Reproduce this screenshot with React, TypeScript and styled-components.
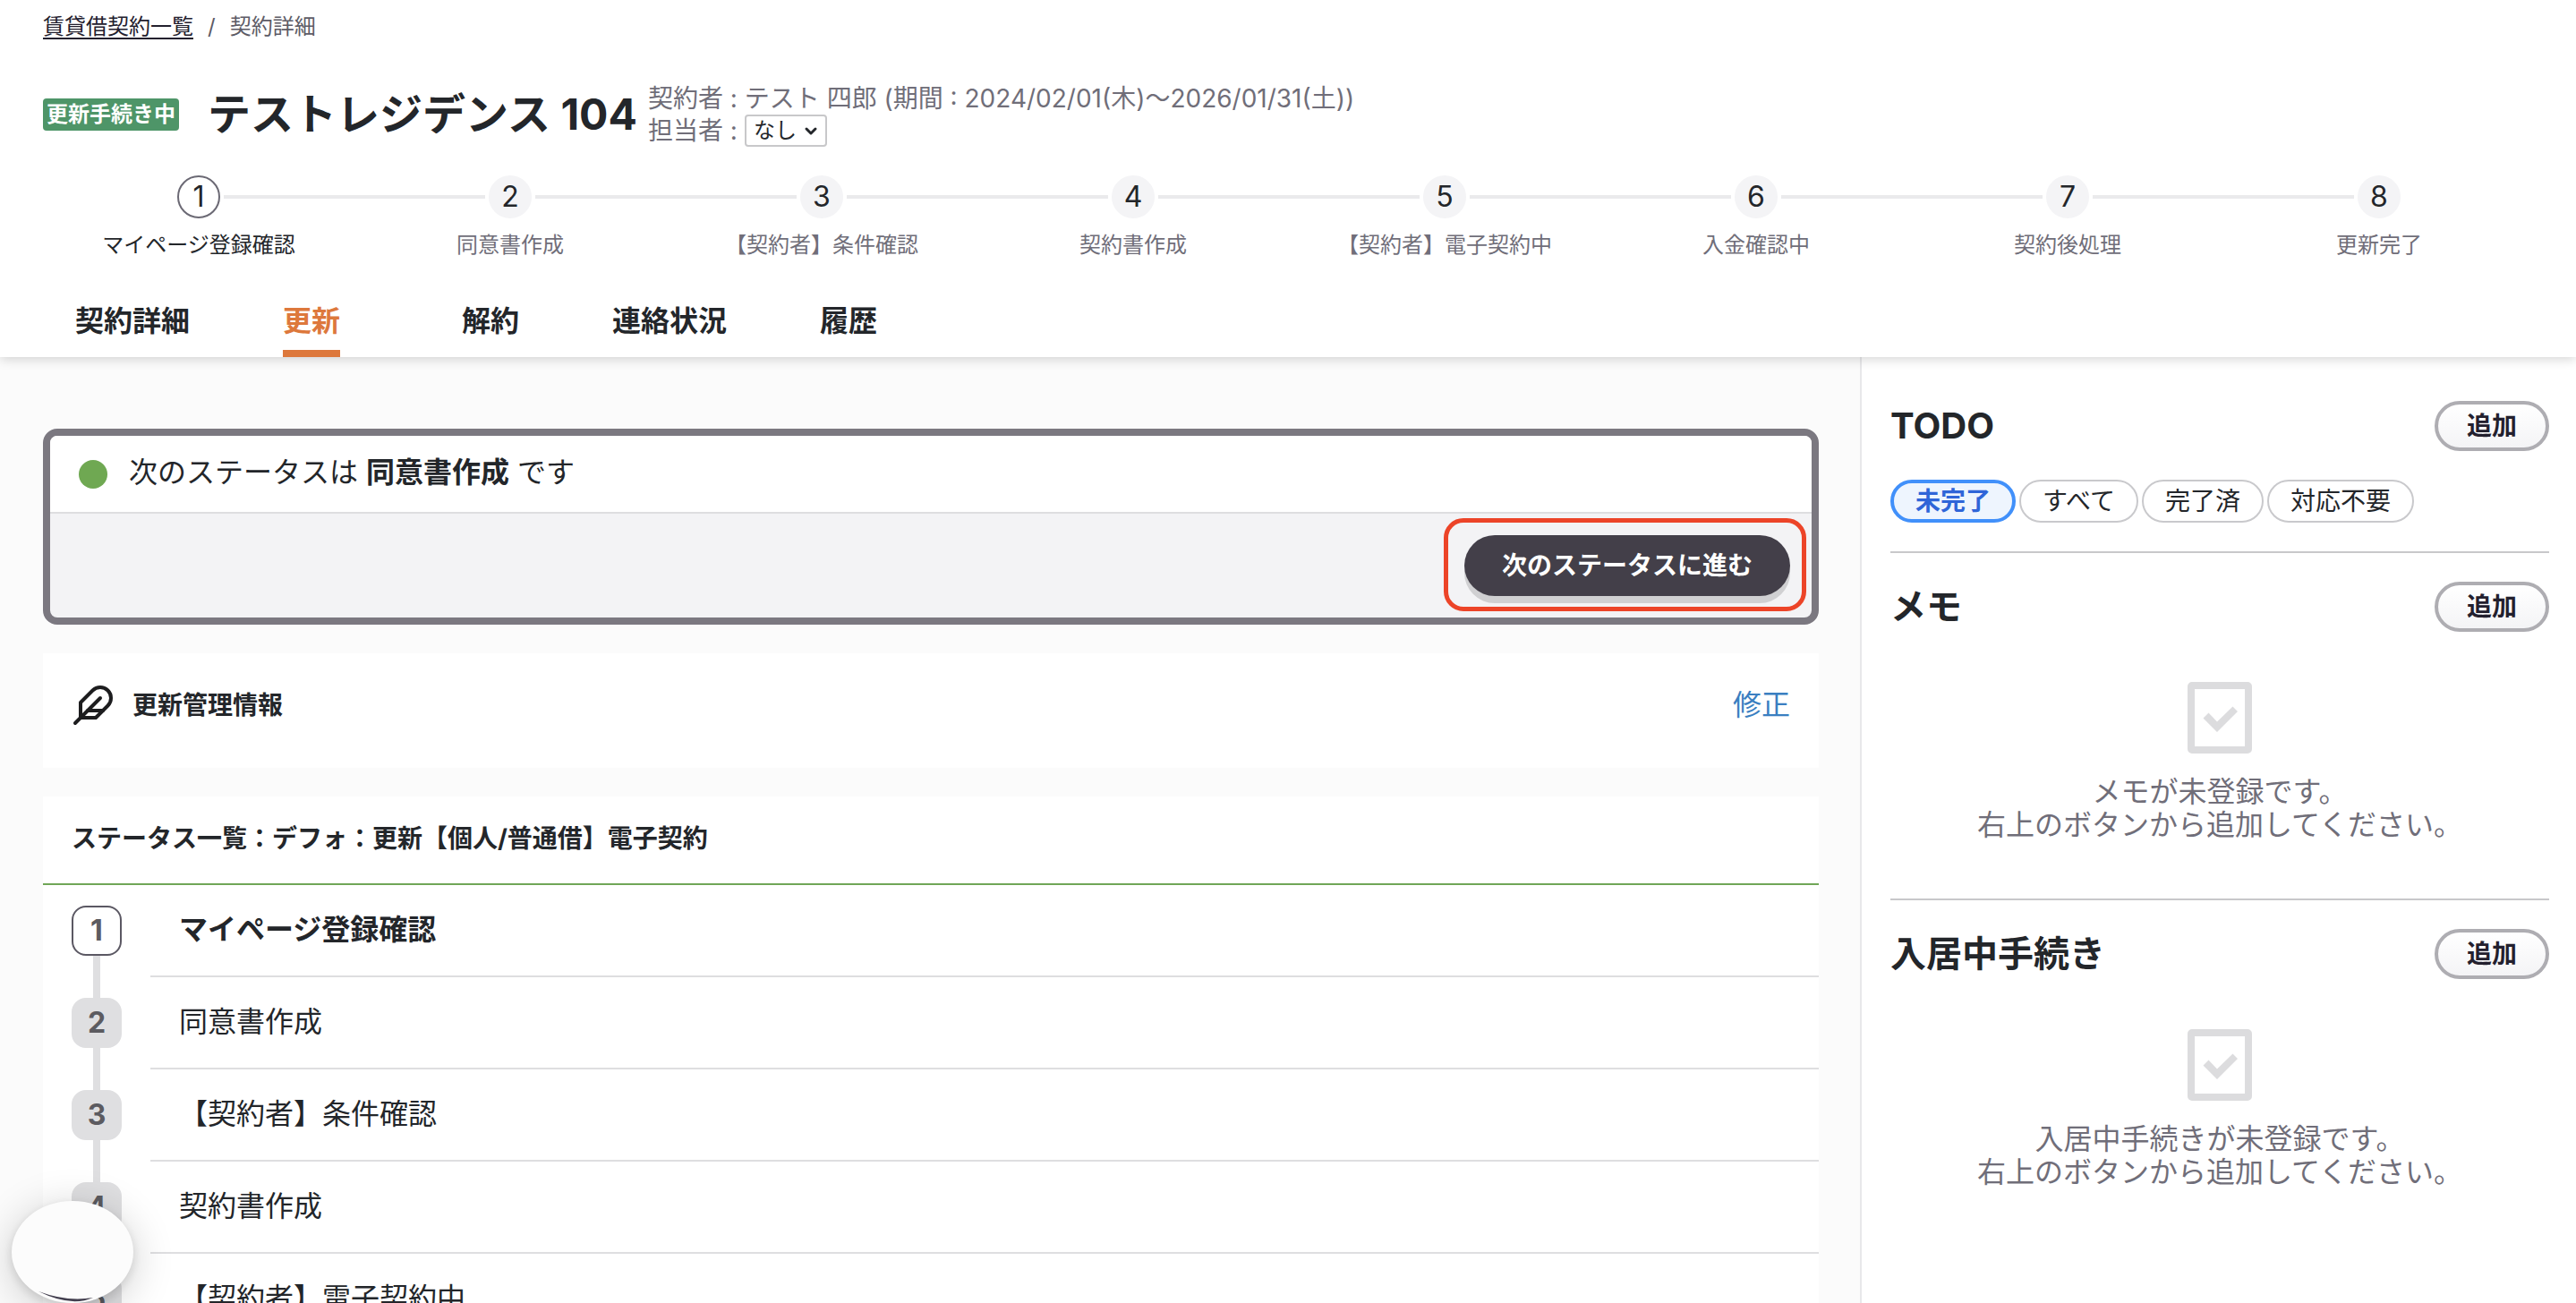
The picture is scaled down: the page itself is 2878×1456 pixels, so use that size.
import React from "react";
import styled, { createGlobalStyle } from "styled-components";

const Global = createGlobalStyle`
  *, *::before, *::after { box-sizing: border-box; }
  html, body, #root { height: 100%; }
  body {
    margin: 0;
    overflow: hidden;
    background: #fbfbfb;
    color: #23262a;
    font-family: Inter, "Noto Sans CJK JP", sans-serif;
    font-size: 32px;
  }
  button, select { font-family: inherit; color: inherit; }
  h1, h2, h3, p, ol { margin: 0; padding: 0; }
  ol { list-style: none; }
`;

const Page = styled.div`
  display: flex;
  flex-direction: column;
  height: 100vh;
  overflow: hidden;
`;

const Header = styled.header`
  position: relative;
  z-index: 1;
  flex: none;
  padding: 12px 46px 0 48px;
  background: #fff;
  box-shadow: 0 2px 12px rgba(0, 0, 0, 0.18);
`;

const Breadcrumb = styled.nav`
  display: flex;
  gap: 16px;
  font-size: 24px;
  line-height: 36px;
  color: #5d5b66;
`;

const CrumbLink = styled.a`
  color: #23202e;
  text-decoration: underline;
  text-underline-offset: 4px;
`;

const TitleRow = styled.div`
  display: flex;
  align-items: center;
  height: 72px;
  margin: 44px 0 32px;
`;

const Badge = styled.span`
  padding: 0 4px;
  border-radius: 4px;
  background: #4e9568;
  color: #fff;
  font-size: 24px;
  font-weight: 700;
  line-height: 36px;
`;

const Title = styled.h1`
  margin: 0 12px 0 32px;
  font-size: 48px;
  font-weight: 700;
  line-height: 72px;
`;

const Meta = styled.div`
  font-size: 28px;
  line-height: 36px;
  color: #706e79;
`;

const MetaLine = styled.div`
  display: flex;
  align-items: center;
  gap: 8px;
  height: 36px;
`;

const SelectBox = styled.span`
  position: relative;
  display: inline-flex;
`;

const Select = styled.select`
  appearance: none;
  width: 92px;
  height: 36px;
  padding: 0 8px;
  border: 2px solid #c8c8ca;
  border-radius: 4px;
  background: #fff;
  color: #23262a;
  font-size: 24px;
  line-height: 32px;
`;

const Chevron = styled.svg`
  position: absolute;
  top: 12px;
  right: 10px;
  pointer-events: none;
`;

const Steps = styled.ol`
  display: grid;
  grid-template-columns: repeat(8, 1fr);
`;

const Step = styled.li`
  position: relative;
  display: flex;
  flex-direction: column;
  align-items: center;
  gap: 12px;

  &:not(:last-child)::after {
    content: "";
    position: absolute;
    top: 22px;
    left: calc(50% + 28px);
    width: calc(100% - 56px);
    height: 4px;
    background: #eaeaec;
  }
`;

const StepNumber = styled.span<{ $active: boolean }>`
  width: 48px;
  height: 48px;
  border: 2px solid ${(p) => (p.$active ? "#6b6974" : "#f4f4f6")};
  border-radius: 50%;
  background: ${(p) => (p.$active ? "#fff" : "#f4f4f6")};
  font-size: 32px;
  line-height: 44px;
  text-align: center;
`;

const StepLabel = styled.span<{ $active: boolean }>`
  color: ${(p) => (p.$active ? "#23262a" : "#706e79")};
  font-size: 24px;
  line-height: 36px;
  white-space: nowrap;
`;

const Tabs = styled.nav`
  display: flex;
  margin-top: 43px;
`;

const TabCell = styled.div`
  display: flex;
  justify-content: center;
  width: 200px;
`;

const Tab = styled.a<{ $active: boolean }>`
  height: 64px;
  border-bottom: 8px solid ${(p) => (p.$active ? "#dd783c" : "transparent")};
  color: ${(p) => (p.$active ? "#dd783c" : "#23262a")};
  font-weight: 700;
  line-height: 48px;
  text-decoration: none;
`;

const Body = styled.div`
  display: flex;
  flex: 1;
  min-height: 0;
`;

const Main = styled.main`
  display: flex;
  flex: 1;
  flex-direction: column;
  gap: 32px;
  min-width: 0;
  padding: 80px 46px 0 48px;
`;

const NextBox = styled.section`
  flex: none;
  border: 8px solid #7b7880;
  border-radius: 16px;
  background: #f3f3f5;
`;

const NextHead = styled.div`
  display: flex;
  align-items: center;
  gap: 24px;
  height: 87px;
  padding: 0 32px;
  border-bottom: 2px solid #dedee0;
  border-radius: 8px 8px 0 0;
  background: #fff;
`;

const NextText = styled.p`
  padding-bottom: 4px;
  line-height: 44px;
`;

const Dot = styled.span`
  width: 32px;
  height: 32px;
  border-radius: 50%;
  background: #6fa852;
`;

const NextFoot = styled.div`
  display: flex;
  justify-content: flex-end;
  padding: 24px;
`;

const ActionWrap = styled.div`
  position: relative;
`;

const Highlight = styled.span`
  position: absolute;
  inset: -19px -18px -17px -23px;
  border: 5px solid #ec4428;
  border-radius: 22px;
  pointer-events: none;
`;

const ActionButton = styled.button`
  display: block;
  height: 68px;
  padding: 0 42px 4px;
  border: 0;
  border-radius: 34px;
  background: #433f49;
  box-shadow: 0 8px 0 #d0d0d2;
  color: #fff;
  font-size: 28px;
  font-weight: 700;
`;

const InfoCard = styled.section`
  display: flex;
  flex: none;
  align-items: center;
  gap: 20px;
  height: 128px;
  padding: 0 32px 12px;
  background: #fff;
`;

const CardTitle = styled.h2`
  flex: 1;
  font-size: 28px;
  font-weight: 700;
  line-height: 44px;
`;

const EditLink = styled.a`
  color: #3a7fc1;
  line-height: 44px;
  text-decoration: none;
`;

const StatusCard = styled.section`
  flex: none;
  background: #fff;
`;

const StatusHead = styled.div`
  display: flex;
  align-items: center;
  height: 99px;
  padding: 0 32px 4px;
  border-bottom: 2px solid #70a657;
`;

const StatusRow = styled.li`
  display: flex;
  gap: 32px;
  height: 103px;
  padding-left: 32px;
`;

const NumberColumn = styled.div`
  display: flex;
  flex-direction: column;
  align-items: center;
  width: 56px;
`;

const Rail = styled.span<{ $visible: boolean; $grow?: boolean }>`
  flex: ${(p) => (p.$grow ? "1" : "0 0 23px")};
  width: 8px;
  background: ${(p) => (p.$visible ? "#dfdfe1" : "transparent")};
`;

const NumberBox = styled.span<{ $active: boolean }>`
  width: 56px;
  height: 56px;
  border: 2px solid ${(p) => (p.$active ? "#5b5863" : "#dfdfe1")};
  border-radius: 16px;
  background: ${(p) => (p.$active ? "#fff" : "#dfdfe1")};
  color: #5c5b60;
  font-weight: 700;
  line-height: 52px;
  text-align: center;
`;

const RowLabel = styled.div<{ $active: boolean }>`
  flex: 1;
  padding: 0 32px;
  border-bottom: 2px solid #dedee0;
  font-weight: ${(p) => (p.$active ? 700 : 400)};
  line-height: 99px;
`;

const Side = styled.aside`
  width: 800px;
  padding: 17px 30px 0 32px;
  border-left: 2px solid #e8e8ea;
  background: #fff;
`;

const Panel = styled.section`
  padding-top: 32px;
  border-bottom: 2px solid #c8c8ca;

  &:last-child { border-bottom: 0; }
`;

const PanelHead = styled.div`
  display: flex;
  align-items: center;
  justify-content: space-between;
  height: 56px;
`;

const PanelTitle = styled.h2`
  font-size: 40px;
  font-weight: 700;
  line-height: 56px;
`;

const AddButton = styled.button`
  width: 128px;
  height: 56px;
  padding: 0;
  border: 4px solid #aeadb2;
  border-radius: 28px;
  background: linear-gradient(#fff, #f4f4f6);
  color: #23202e;
  font-size: 28px;
  font-weight: 700;
  line-height: 44px;
`;

const Chips = styled.div`
  display: flex;
  gap: 4px;
  margin: 32px 0;
`;

const Chip = styled.button<{ $active: boolean }>`
  height: 48px;
  padding: 0 24px;
  border: ${(p) => (p.$active ? "4px solid #4190fa" : "2px solid #c9c9cc")};
  border-radius: 24px;
  background: ${(p) => (p.$active ? "#eef5fe" : "#fff")};
  color: ${(p) => (p.$active ? "#2f65d8" : "#23262a")};
  font-size: 28px;
  font-weight: ${(p) => (p.$active ? 700 : 400)};
  line-height: 36px;
`;

const Empty = styled.div`
  display: flex;
  flex-direction: column;
  align-items: center;
  padding: 56px 0 64px;
`;

const EmptyText = styled.p`
  margin-top: 24px;
  color: #706e79;
  line-height: 37px;
  text-align: center;
`;

const FloatingButton = styled.button`
  position: fixed;
  left: 13px;
  bottom: 0;
  z-index: 2;
  width: 136px;
  height: 114px;
  padding: 0;
  border: 0;
  border-radius: 50%;
  background: #fcfcfc;
  box-shadow: 0 8px 48px rgba(0, 0, 0, 0.2), 0 4px 12px rgba(0, 0, 0, 0.12);

  svg { display: block; }
`;

const steps = [
  "マイページ登録確認",
  "同意書作成",
  "【契約者】条件確認",
  "契約書作成",
  "【契約者】電子契約中",
  "入金確認中",
  "契約後処理",
  "更新完了",
];

const tabs = ["契約詳細", "更新", "解約", "連絡状況", "履歴"];
const filters = ["未完了", "すべて", "完了済", "対応不要"];

function FeatherIcon() {
  return (
    <svg width="48" height="48" viewBox="0 0 24 24" fill="none" stroke="#1d1d1f" strokeWidth="2" strokeLinecap="round" strokeLinejoin="round" aria-hidden="true">
      <path d="M20.24 12.24a6 6 0 0 0-8.49-8.49L5 10.5V19h8.5z" />
      <path d="M16 8 2 22" />
      <path d="M17.5 15H9" />
    </svg>
  );
}

function EmptyIcon() {
  return (
    <svg width="72" height="80" viewBox="0 0 72 80" aria-hidden="true">
      <rect x="4" y="4" width="64" height="72" rx="1" fill="none" stroke="#dcdcde" strokeWidth="8" />
      <path d="M17.500 40.500 23.500 34.500 33 44.500 50.500 27.500 56 33 33 56Z" fill="#dcdcde" />
    </svg>
  );
}

function EmptyPanel({ title }: { title: string }) {
  return (
    <Panel>
      <PanelHead>
        <PanelTitle>{title}</PanelTitle>
        <AddButton type="button">追加</AddButton>
      </PanelHead>
      <Empty>
        <EmptyIcon />
        <EmptyText>
          {title}が未登録です。
          <br />
          右上のボタンから追加してください。
        </EmptyText>
      </Empty>
    </Panel>
  );
}

export default function App() {
  return (
    <Page lang="ja">
      <Global />
      <Header>
        <Breadcrumb aria-label="パンくず">
          <CrumbLink href="#list">賃貸借契約一覧</CrumbLink>
          <span>/</span>
          <span>契約詳細</span>
        </Breadcrumb>
        <TitleRow>
          <Badge>更新手続き中</Badge>
          <Title>テストレジデンス 104</Title>
          <Meta>
            <MetaLine>契約者 : テスト 四郎 (期間 : 2024/02/01(木)〜2026/01/31(土))</MetaLine>
            <MetaLine>
              <label htmlFor="manager">担当者 :</label>
              <SelectBox>
                <Select id="manager" defaultValue="none">
                  <option value="none">なし</option>
                </Select>
                <Chevron width="16" height="14" viewBox="0 0 16 14" fill="none" stroke="#23262a" strokeWidth="3" strokeLinecap="round" strokeLinejoin="round" aria-hidden="true">
                  <path d="M3 4 8 9 13 4" />
                </Chevron>
              </SelectBox>
            </MetaLine>
          </Meta>
        </TitleRow>
        <Steps>
          {steps.map((label, i) => (
            <Step key={label}>
              <StepNumber $active={i === 0}>{i + 1}</StepNumber>
              <StepLabel $active={i === 0}>{label}</StepLabel>
            </Step>
          ))}
        </Steps>
        <Tabs>
          {tabs.map((label, i) => (
            <TabCell key={label}>
              <Tab href={`#tab-${i}`} $active={i === 1}>{label}</Tab>
            </TabCell>
          ))}
        </Tabs>
      </Header>
      <Body>
        <Main>
          <NextBox>
            <NextHead>
              <Dot />
              <NextText>次のステータスは <strong>同意書作成</strong> です</NextText>
            </NextHead>
            <NextFoot>
              <ActionWrap>
                <ActionButton type="button">次のステータスに進む</ActionButton>
                <Highlight />
              </ActionWrap>
            </NextFoot>
          </NextBox>
          <InfoCard>
            <FeatherIcon />
            <CardTitle>更新管理情報</CardTitle>
            <EditLink href="#edit">修正</EditLink>
          </InfoCard>
          <StatusCard>
            <StatusHead>
              <CardTitle>ステータス一覧：デフォ：更新【個人/普通借】電子契約</CardTitle>
            </StatusHead>
            <ol>
              {steps.slice(0, 5).map((label, i) => (
                <StatusRow key={label}>
                  <NumberColumn>
                    <Rail $visible={i > 0} />
                    <NumberBox $active={i === 0}>{i + 1}</NumberBox>
                    <Rail $visible $grow />
                  </NumberColumn>
                  <RowLabel $active={i === 0}>{label}</RowLabel>
                </StatusRow>
              ))}
            </ol>
          </StatusCard>
        </Main>
        <Side>
          <Panel>
            <PanelHead>
              <PanelTitle>TODO</PanelTitle>
              <AddButton type="button">追加</AddButton>
            </PanelHead>
            <Chips>
              {filters.map((label, i) => (
                <Chip key={label} type="button" $active={i === 0}>{label}</Chip>
              ))}
            </Chips>
          </Panel>
          <EmptyPanel title="メモ" />
          <EmptyPanel title="入居中手続き" />
        </Side>
      </Body>
      <FloatingButton type="button" aria-label="ヘルプ">
        <svg width="136" height="114" viewBox="0 0 136 114" aria-hidden="true">
          <path d="M30 101Q66 119 91 108Q62 113 30 101Z" fill="#433f4f" />
        </svg>
      </FloatingButton>
    </Page>
  );
}
